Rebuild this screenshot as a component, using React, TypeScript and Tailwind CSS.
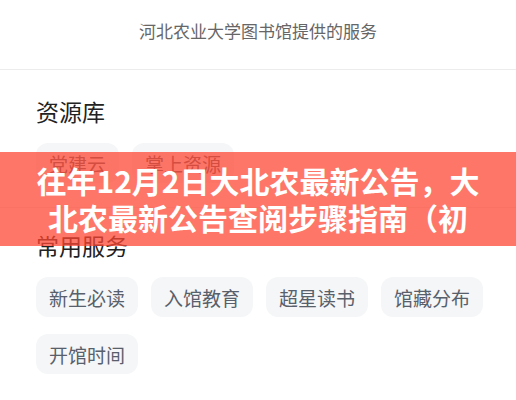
import React from "react";

const resources = ["党建云", "掌上资源"];
const services = ["新生必读", "入馆教育", "超星读书", "馆藏分布", "开馆时间"];

const Chip = ({ label }: { label: string }) => {
  return (
    <button className="h-10 px-[13px] rounded-xl bg-[#f5f6f7] text-[19px] leading-none text-[#58606b]">
      {label}
    </button>
  );
};

const Section = ({ title, items, divider, top }: { title: string; items: string[]; divider?: boolean; top: string }) => {
  return (
    <section className={`pl-9 pr-6 pb-6 ${top} ${divider ? "border-b border-[#efefef]" : ""}`}>
      <h2 className="text-[23px] leading-[30px] text-[#222] font-normal">{title}</h2>
      <div className="mt-[17px] flex flex-wrap gap-x-[13px] gap-y-[17px]">
        {items.map((each) => (
          <Chip key={each} label={each} />
        ))}
      </div>
    </section>
  );
};

export default function App() {
  return (
    <div
      className="relative w-[516px] h-[400px] overflow-hidden bg-white"
      style={{ fontFamily: '"Noto Sans CJK SC", "Noto Sans", sans-serif' }}
    >
      <header className="h-[70px] flex items-center justify-center border-b border-[#ececec]">
        <p className="text-[17px] text-[#666] pb-[8px]">河北农业大学图书馆提供的服务</p>
      </header>
      <Section title="资源库" items={resources} divider top="pt-[26px]" />
      <Section title="常用服务" items={services} top="pt-[22px]" />

      {/* title banner over the page */}
      <div className="absolute left-0 right-0 top-[152px] h-[94px] bg-[rgba(254,70,50,0.74)] flex flex-col items-center justify-center">
        <p className="text-white text-[30px] font-bold leading-[37px] whitespace-nowrap">
          往年12月2日大北农最新公告，大
        </p>
        <p className="text-white text-[30px] font-bold leading-[37px] whitespace-nowrap">
          北农最新公告查阅步骤指南（初
        </p>
      </div>
    </div>
  );
}
